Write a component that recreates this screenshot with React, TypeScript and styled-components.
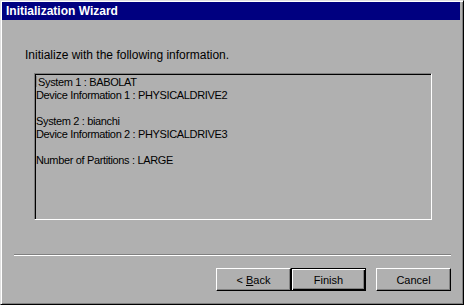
import React from 'react';
import styled, { createGlobalStyle } from 'styled-components';

const GlobalStyle = createGlobalStyle`
  html, body {
    margin: 0;
    padding: 0;
    background: #b0b0b0;
  }
  * {
    box-sizing: border-box;
  }
`;

const Window = styled.div`
  width: 464px;
  height: 305px;
  display: flex;
  flex-direction: column;
  background: #b0b0b0;
  border: 1px solid;
  border-color: #dfdfdf #000 #000 #dfdfdf;
  box-shadow: inset 1px 1px #fff, inset -1px -1px #808080;
  padding: 1px 3px 2px 1px;
  font-family: 'Liberation Sans', Arial, sans-serif;
  font-size: 11px;
  color: #000;
`;

const TitleBar = styled.div`
  height: 18px;
  background: #000080;
  color: #fff;
  font-weight: bold;
  font-size: 12px;
  line-height: 18px;
  padding-left: 4px;
`;

const Body = styled.div`
  flex: 1;
  display: flex;
  flex-direction: column;
  padding: 29px 0 0 12px;
`;

const Prompt = styled.div`
  font-size: 12px;
  line-height: 13px;
  margin-left: 11px;
`;

const InfoBox = styled.div`
  margin: 11px 0 0 20px;
  width: 398px;
  height: 147px;
  border: 1px solid;
  border-color: #808080 #fff #fff #808080;
  box-shadow: inset 1px 1px #000;
  padding: 2px 4px 0 1px;
  line-height: 13px;
  letter-spacing: -0.35px;
`;

const Line = styled.div`
  height: 13px;
  white-space: pre;
`;

const Caret = styled.span`
  display: inline-block;
  width: 1px;
  height: 11px;
  margin-right: 1px;
  vertical-align: -1px;
  background: #8a8a8a;
`;

const Separator = styled.div`
  margin-top: 34px;
  width: 437px;
  height: 2px;
  border-top: 1px solid #808080;
  border-bottom: 1px solid #fff;
`;

const ButtonRow = styled.div`
  display: flex;
  margin: 12px 0 0 202px;
`;

const Button = styled.button<{ $default?: boolean; $gap?: number }>`
  width: 75px;
  height: 23px;
  margin-left: ${(p) => p.$gap ?? 0}px;
  padding: 0;
  background: #b0b0b0;
  font-family: inherit;
  font-size: 11px;
  color: #000;
  border: 1px solid;
  border-color: ${(p) => (p.$default ? '#000' : '#fff #000 #000 #fff')};
  box-shadow: ${(p) =>
    p.$default
      ? 'inset 1px 1px #fff, inset -1px -1px #000, inset -2px -2px #808080'
      : 'inset -1px -1px #808080'};
  cursor: default;

  u {
    text-decoration: underline;
    text-underline-offset: 1px;
  }
`;

const info = [
  'System 1 : BABOLAT',
  'Device Information 1 : PHYSICALDRIVE2',
  '',
  'System 2 : bianchi',
  'Device Information 2 : PHYSICALDRIVE3',
  '',
  'Number of Partitions : LARGE',
];

const App = () => {
  return (
    <>
      <GlobalStyle />
      <Window>
        <TitleBar>Initialization Wizard</TitleBar>
        <Body>
          <Prompt>Initialize with the following information.</Prompt>
          <InfoBox>
            {info.map((text, i) => (
              <Line key={i}>
                {i === 0 && <Caret />}
                {text}
              </Line>
            ))}
          </InfoBox>
          <Separator />
          <ButtonRow>
            <Button>
              &lt; <u>B</u>ack
            </Button>
            <Button $default>Finish</Button>
            <Button $gap={10}>Cancel</Button>
          </ButtonRow>
        </Body>
      </Window>
    </>
  );
};

export default App;
